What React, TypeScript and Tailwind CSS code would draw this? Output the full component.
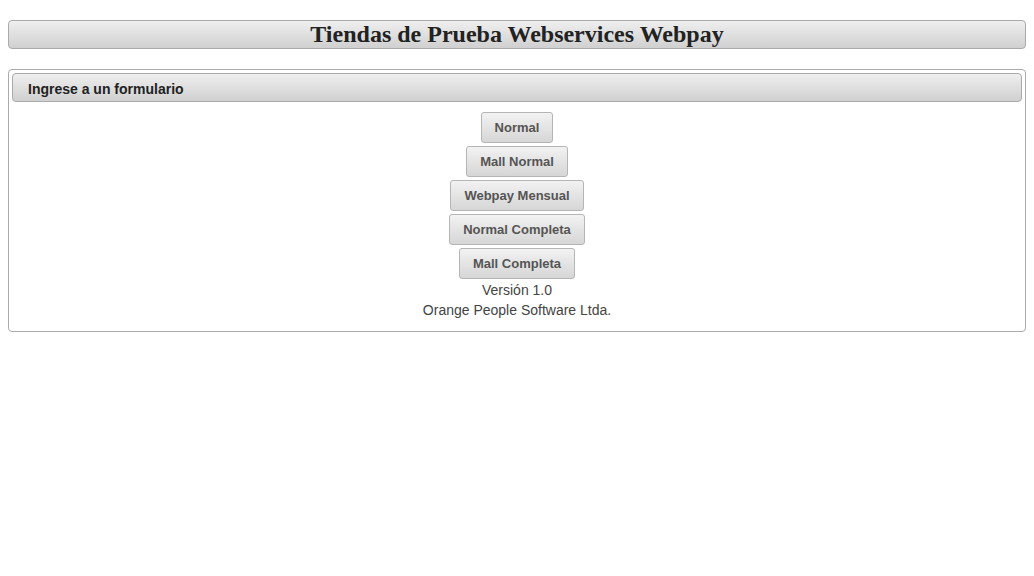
const buttons = ["Normal", "Mall Normal", "Webpay Mensual", "Normal Completa", "Mall Completa"]

const App = () => {
  return (
    <div className="min-h-screen bg-white px-2 pt-5 font-['Liberation_Sans',Arial,sans-serif] text-[#333]">
      <div className="h-[29px] rounded border border-[#aaa] bg-gradient-to-b from-[#efefef] to-[#d0d0d0] flex items-center justify-center pb-[2px]">
        <h1 className="font-['Liberation_Serif','Times_New_Roman',serif] text-[24px] font-bold leading-none text-[#222]">
          Tiendas de Prueba Webservices Webpay
        </h1>
      </div>

      <div className="mt-5 rounded border border-[#aaa] p-[3px] pb-[11px]">
        <div className="h-[29px] rounded border border-[#aaa] bg-gradient-to-b from-[#efefef] to-[#d0d0d0] flex items-center px-[15px] pt-[3px]">
          <span className="text-[14px] font-bold text-[#222]">Ingrese a un formulario</span>
        </div>
        <div className="mt-[10px] flex flex-col items-center gap-[3px]">
          {buttons.map((b) => (
            <button
              key={b}
              className="h-[31px] rounded-[3px] border border-[#b5b5b5] bg-gradient-to-b from-[#f2f2f2] to-[#d6d6d6] px-[13px] text-[13px] font-bold text-[#555]"
            >
              {b}
            </button>
          ))}
        </div>
        <div className="mt-[1px] flex flex-col items-center text-[14px] leading-5 text-[#444]">
          <span>Versión 1.0</span>
          <span>Orange People Software Ltda.</span>
        </div>
      </div>
    </div>
  )
}

export default App
